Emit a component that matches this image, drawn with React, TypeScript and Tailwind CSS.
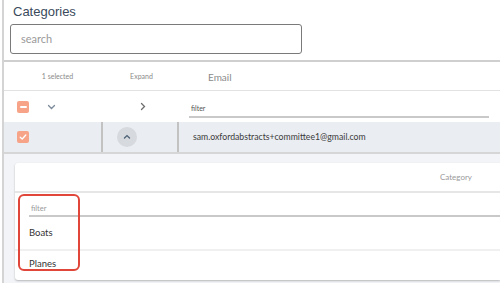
import React from "react";

const lato = { fontFamily: "Lato, 'Open Sans', sans-serif" };

function MinusBox() {
  return (
    <div className="w-[12px] h-[12px] rounded-[2px] bg-[#f6a388] flex items-center justify-center">
      <div className="w-[7px] h-[2px] bg-white rounded-full" />
    </div>
  );
}

function CheckBox() {
  return (
    <div className="w-[12px] h-[12px] rounded-[2px] bg-[#f6a388] flex items-center justify-center">
      <svg width="8" height="8" viewBox="0 0 8 8" fill="none">
        <path d="M1.2 4.2 L3.2 6 L6.8 2" stroke="white" strokeWidth="1.3" strokeLinecap="round" strokeLinejoin="round" />
      </svg>
    </div>
  );
}

export default function App() {
  return (
    <div className="w-[500px] h-[283px] bg-white overflow-hidden flex" style={{ fontFamily: "'Liberation Sans', Arial, sans-serif" }}>
      <div className="w-[2px] shrink-0" />
      <div className="flex-1 flex flex-col border-l-[2px] border-[#d4d4d4] min-w-0">
        {/* title */}
        <div className="pl-[9px] pt-[4px] text-[13px] leading-[16px] text-[#3a4a5c]">Categories</div>
        <div className="pl-[6px] pt-[4px]">
          <div className="w-[292px] h-[30px] border border-[#7a7a7a] rounded-[3px] flex items-center pl-[10px] text-[11px] text-[#9a9a9a]" style={lato}>
            search
          </div>
        </div>
        <div className="mt-[6px] h-[2px] bg-[#cfcfcf]" />
        {/* header row */}
        <div className="h-[29px] flex items-center border-b border-[#e2e2e2] text-[#8a8a8a]" style={lato}>
          <div className="w-[97px] shrink-0 text-center text-[7px] pl-[10px]">1 selected</div>
          <div className="w-[78px] shrink-0 text-center text-[7px] pl-[3px]">Expand</div>
          <div className="pl-[29px] text-[10px] pt-[2px]">Email</div>
        </div>
        {/* filter row */}
        <div className="h-[31px] flex items-center" style={lato}>
          <div className="w-[97px] shrink-0 flex items-center pl-[13px]">
            <MinusBox />
            <svg className="ml-[18px]" width="9" height="6" viewBox="0 0 9 6" fill="none">
              <path d="M1.5 1.5 L4.5 4.5 L7.5 1.5" stroke="#7c8a9a" strokeWidth="1.3" strokeLinecap="round" />
            </svg>
          </div>
          <div className="w-[78px] shrink-0 flex justify-center pl-[6px]">
            <svg width="6" height="9" viewBox="0 0 6 9" fill="none">
              <path d="M1.5 1.5 L4.5 4.5 L1.5 7.5" stroke="#6d6d6d" strokeWidth="1.3" strokeLinecap="round" />
            </svg>
          </div>
          <div className="flex-1 pl-[10px] pr-[11px] pt-[8px]">
            <div className="border-b-[2px] border-[#c9c9c9] text-[7px] text-[#555] pb-[2px] pl-[2px]">filter</div>
          </div>
        </div>
        {/* selected row */}
        <div className="h-[32px] flex bg-[#eaedf2] border-b-[2px] border-[#d6d6d6]" style={lato}>
          <div className="w-[97px] shrink-0 flex items-center pl-[13px]">
            <CheckBox />
          </div>
          <div className="w-[78px] shrink-0 border-l-[2px] border-r-[2px] border-[#c2c2c2] flex items-center pl-[14px]">
            <div className="w-[20px] h-[20px] rounded-full bg-[#d6d9de] flex items-center justify-center">
              <svg width="8" height="6" viewBox="0 0 8 6" fill="none">
                <path d="M1.5 4 L4 1.6 L6.5 4" stroke="#4f6478" strokeWidth="1.4" strokeLinecap="round" />
              </svg>
            </div>
          </div>
          <div className="flex-1 flex items-center pl-[14px] text-[8.7px] text-[#3b3b3b]">
            sam.oxfordabstracts+committee1@gmail.com
          </div>
        </div>
        {/* expanded area */}
        <div className="flex-1 bg-[#f3f4f7] pl-[11px] pt-[9px] pb-[3px] flex flex-col">
          <div className="flex-1 bg-white shadow-[0_1px_2px_rgba(0,0,0,0.25)] rounded-l-[3px] flex flex-col relative" style={lato}>
            <div className="h-[30px] flex items-center justify-end pr-[28px] text-[8px] text-[#9a9a9a] border-b-[2px] border-[#e6e6e6] shrink-0">
              Category
            </div>
            <div className="pl-[14px] pt-[10px]">
              <div className="border-b-[2px] border-[#c9c9c9] text-[7.5px] text-[#9a9a9a] pb-[1px] pl-[2px]">filter</div>
            </div>
            <div className="h-[34px] shrink-0 flex items-center pl-[14px] text-[9.5px] text-[#333] border-b-[2px] border-[#f0f0f0]">Boats</div>
            <div className="h-[26px] shrink-0 flex items-center pl-[14px] text-[9.5px] text-[#333]">Planes</div>
            <div className="absolute left-[3px] top-[31px] w-[62px] h-[77px] border-[2px] border-[#e0473a] rounded-[6px]" />
          </div>
        </div>
      </div>
    </div>
  );
}
